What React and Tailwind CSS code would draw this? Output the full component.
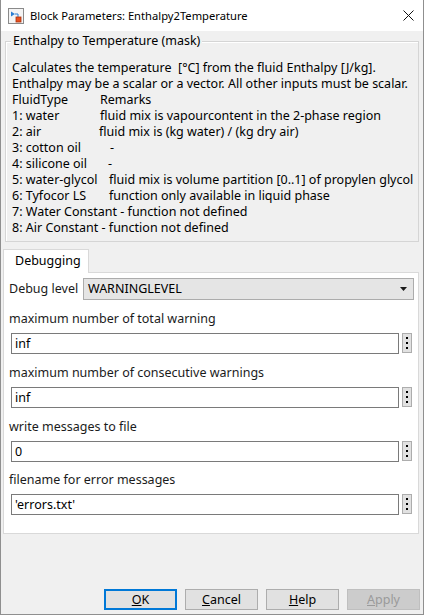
import React from 'react';

const fluidRows = [
    { name: 'FluidType', remark: 'Remarks', w: 'w-[88px]' },
    { name: '1: water', remark: 'fluid mix is vapourcontent in the 2-phase region', w: 'w-[88px]' },
    { name: '2: air', remark: 'fluid mix is (kg water) / (kg dry air)', w: 'w-[87px]' },
    { name: '3: cotton oil', remark: '-', w: 'w-[98px]' },
    { name: '4: silicone oil', remark: '-', w: 'w-[96px]' },
    { name: '5: water-glycol', remark: 'fluid mix is volume partition [0..1] of propylen glycol', w: 'w-[97px]' },
    { name: '6: Tyfocor LS', remark: 'function only available in liquid phase', w: 'w-[97px]' },
];

const fields = [
    { label: 'maximum number of total warning', value: 'inf', gap: 'mt-[11px]' },
    { label: 'maximum number of consecutive warnings', value: 'inf', gap: 'mt-[11px]' },
    { label: 'write messages to file', value: '0', gap: 'mt-[11px]' },
    { label: 'filename for error messages', value: "'errors.txt'", gap: 'mt-[10px]' },
];

function BlockIcon() {
    return (
        <svg width="16" height="16" viewBox="0 0 16 16">
            <rect x="0.5" y="0.5" width="15" height="15" fill="#f4f4f4" stroke="#8a8a8a" />
            <path d="M3 3.5 L3 8.5 L7 6 Z" fill="#2a7fd4" />
            <path d="M7 6 L10 6 L10 9" fill="none" stroke="#2a7fd4" strokeWidth="1" />
            <rect x="8" y="9" width="5" height="5" fill="#e8501e" stroke="#a8300e" strokeWidth="0.8" />
        </svg>
    );
}

function Kebab() {
    return (
        <div className="w-[10px] h-[20px] bg-[#e1e1e1] border border-[#adadad] flex flex-col items-center justify-center gap-[3px]">
            <span className="w-[2px] h-[2px] bg-black" />
            <span className="w-[2px] h-[2px] bg-black" />
            <span className="w-[2px] h-[2px] bg-black" />
        </div>
    );
}

function Field({ label, value, gap }) {
    return (
        <div className={gap}>
            <div className="h-[16px] text-[#1b1b1b]">{label}</div>
            <div className="mt-[6px] pl-[2px] flex items-start gap-[3px]">
                <div className="w-[388px] h-[21px] border border-[#7a7a7a] bg-white pl-[3px] flex items-center">
                    {value}
                </div>
                <Kebab />
            </div>
        </div>
    );
}

function DialogButton({ children, primary, disabled }) {
    const base = 'w-[73px] h-[21px] flex items-center justify-center';
    if (primary) {
        return <div className={`${base} bg-[#e1e1e1] border-2 border-[#0078d7]`}>{children}</div>;
    }
    if (disabled) {
        return <div className={`${base} bg-[#cccccc] border border-[#bfbfbf] text-[#9a9a9a]`}>{children}</div>;
    }
    return <div className={`${base} bg-[#e1e1e1] border border-[#adadad]`}>{children}</div>;
}

export default function App() {
    return (
        <div className="w-[424px] h-[615px] bg-[#f0f0f0] border-x border-b border-[#8f8f8f] flex flex-col overflow-hidden font-['Noto_Sans',sans-serif] text-[12.5px] leading-[16px] text-black">
            {/* title bar */}
            <div className="h-[31px] shrink-0 bg-white flex items-center pl-[7px] pr-[9px]">
                <BlockIcon />
                <span className="ml-[6px] text-[11.2px]">Block Parameters: Enthalpy2Temperature</span>
                <svg className="ml-auto" width="11" height="11" viewBox="0 0 11 11">
                    <path d="M0.5 0.5 L10.5 10.5 M10.5 0.5 L0.5 10.5" stroke="#111" strokeWidth="1" />
                </svg>
            </div>

            {/* mask description group */}
            <div className="relative mt-[10px] ml-[4px] mr-[4px] border border-[#d5d5d5] shadow-[inset_1px_1px_0_#ffffff] pt-[18px] pb-[5px] pl-[6px]">
                <span className="absolute -top-[9px] left-[5px] px-[2px] bg-[#f0f0f0]">Enthalpy to Temperature (mask)</span>
                <div>Calculates the temperature&nbsp; [°C] from the fluid Enthalpy [J/kg].</div>
                <div>Enthalpy may be a scalar or a vector. All other inputs must be scalar.</div>
                {fluidRows.map((r) => (
                    <div key={r.name} className="flex whitespace-nowrap">
                        <span className={`${r.w} shrink-0`}>{r.name}</span>
                        <span>{r.remark}</span>
                    </div>
                ))}
                <div>7: Water Constant - function not defined</div>
                <div>8: Air Constant - function not defined</div>
            </div>

            {/* tab */}
            <div className="mt-[7px] ml-[2px] relative z-10 -mb-px w-[86px] h-[24px] bg-white border-t border-x border-[#d9d9d9] pl-[11px] pt-[3px]">
                Debugging
            </div>
            <div className="ml-[2px] mr-[4px] h-[262px] shrink-0 bg-white border border-[#d9d9d9] pt-[5px] pl-[5px] pr-[4px]">
                <div className="flex items-center h-[22px]">
                    <span className="w-[74px] shrink-0 text-[#1b1b1b]">Debug level</span>
                    <div className="flex-1 h-[22px] bg-[#e5e5e5] border border-[#acacac] pl-[4px] pr-[6px] flex items-center">
                        <span>WARNINGLEVEL</span>
                        <svg className="ml-auto" width="7" height="4" viewBox="0 0 7 4">
                            <path d="M0 0 L7 0 L3.5 4 Z" fill="#1a1a1a" />
                        </svg>
                    </div>
                </div>
                {fields.map((f) => (
                    <Field key={f.label} {...f} />
                ))}
            </div>

            {/* buttons */}
            <div className="mt-auto mb-[4px] mr-[3px] flex justify-end gap-[8px]">
                <DialogButton primary><span><u>O</u>K</span></DialogButton>
                <DialogButton><span><u>C</u>ancel</span></DialogButton>
                <DialogButton><span><u>H</u>elp</span></DialogButton>
                <DialogButton disabled><span><u>A</u>pply</span></DialogButton>
            </div>
        </div>
    );
}
